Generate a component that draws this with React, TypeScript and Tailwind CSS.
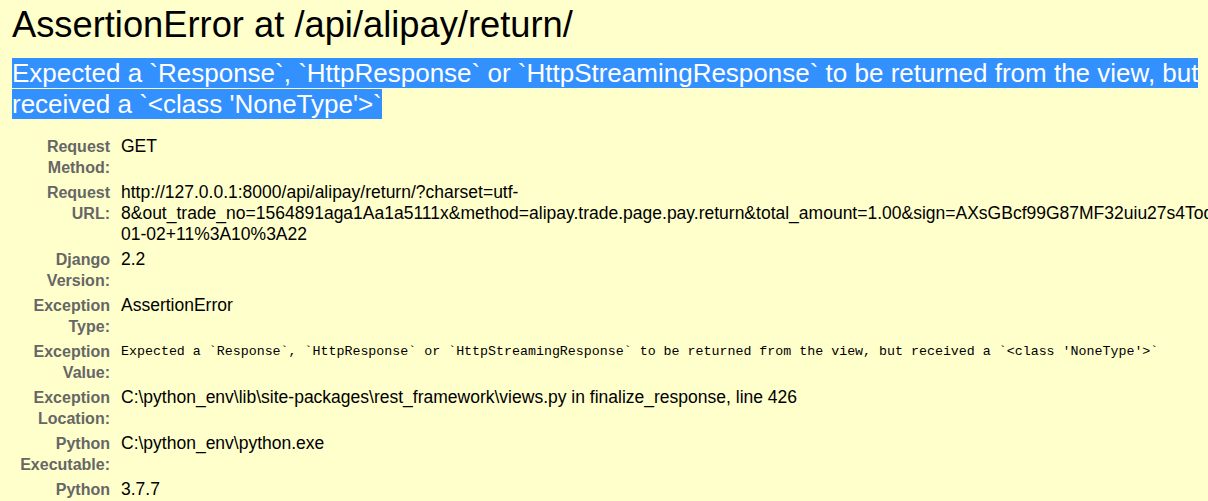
const rows: { label: [string, string]; value: React.ReactNode; mono?: boolean }[] = [
  { label: ["Request", "Method:"], value: "GET" },
  {
    label: ["Request", "URL:"],
    value: (
      <>
        http://127.0.0.1:8000/api/alipay/return/?charset=utf-
        <br />
        8&amp;out_trade_no=1564891aga1Aa1a5111x&amp;method=alipay.trade.page.pay.return&amp;total_amount=1.00&amp;sign=AXsGBcf99G87MF32uiu27s4Toq
        <br />
        01-02+11%3A10%3A22
      </>
    ),
  },
  { label: ["Django", "Version:"], value: "2.2" },
  { label: ["Exception", "Type:"], value: "AssertionError" },
  {
    label: ["Exception", "Value:"],
    value:
      "Expected a `Response`, `HttpResponse` or `HttpStreamingResponse` to be returned from the view, but received a `<class 'NoneType'>`",
    mono: true,
  },
  {
    label: ["Exception", "Location:"],
    value: "C:\\python_env\\lib\\site-packages\\rest_framework\\views.py in finalize_response, line 426",
  },
  { label: ["Python", "Executable:"], value: "C:\\python_env\\python.exe" },
  { label: ["Python", "Version:"], value: "3.7.7" },
];

export default function App() {
  return (
    <div className="w-[1208px] h-[501px] overflow-hidden bg-[#ffffcc] text-black font-['Liberation_Sans',Arial,sans-serif]">
      <div id="summary" className="px-3 pt-1">
        <h1 className="text-[36.3px] leading-[42px] font-normal whitespace-nowrap">
          AssertionError at /api/alipay/return/
        </h1>

        {/* exception value, shown selected as in the screenshot */}
        <h2 className="mt-3 mb-[14px] text-[26px] leading-[31px] font-normal text-white whitespace-nowrap">
          <span className="bg-[#3390ff]">
            Expected a `Response`, `HttpResponse` or `HttpStreamingResponse` to be returned from the view, but{" "}
          </span>
          <br />
          <span className="bg-[#3390ff]">received a `&lt;class 'NoneType'&gt;`</span>
        </h2>

        <table className="border-collapse">
          <tbody>
            {rows.map((r) => (
              <tr key={r.label.join(" ")}>
                <th className="align-top text-right pl-[3px] pr-2 py-[2px] text-[16px] leading-[21px] font-bold text-[#666]">
                  <div className="w-[95px]">
                    {r.label[0]}
                    <br />
                    {r.label[1]}
                  </div>
                </th>
                <td
                  className={
                    r.mono
                      ? "align-top pl-[3px] py-[2px] leading-[21px] whitespace-nowrap text-[13.3px] font-['Liberation_Mono',monospace]"
                      : "align-top pl-[3px] py-[2px] leading-[21px] whitespace-nowrap text-[17.5px]"
                  }
                >
                  {r.value}
                </td>
              </tr>
            ))}
          </tbody>
        </table>
      </div>
    </div>
  );
}
